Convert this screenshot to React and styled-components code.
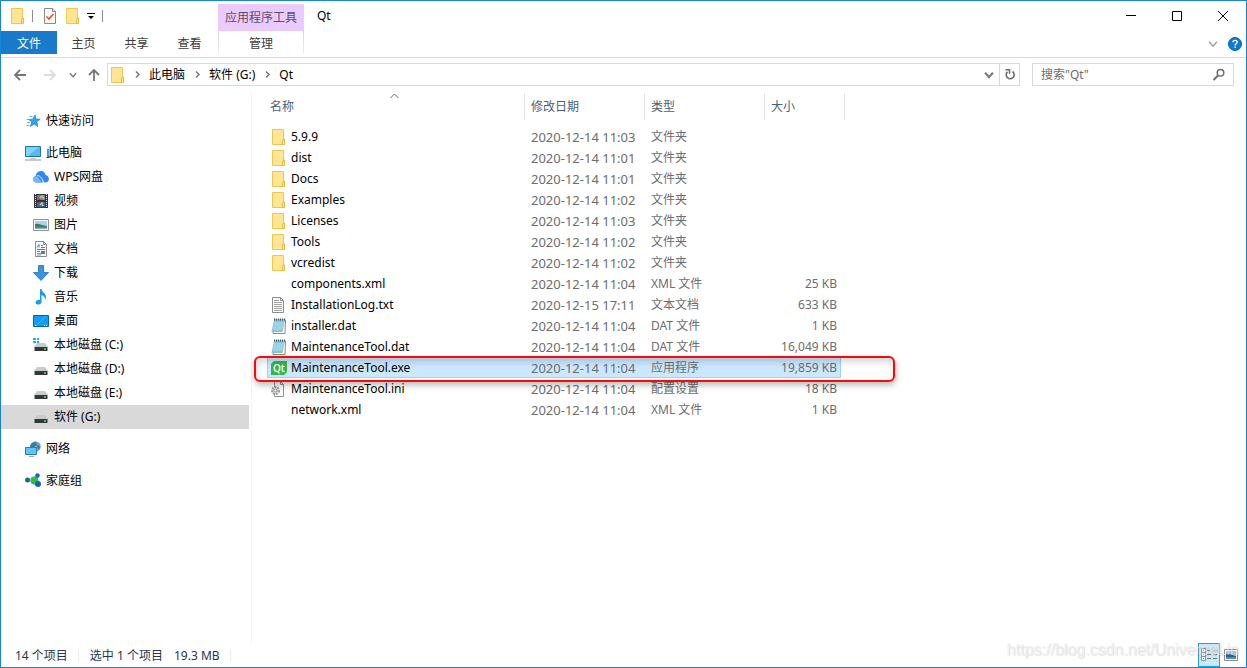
import React from "react";
import styled, { createGlobalStyle, css } from "styled-components";

const Global = createGlobalStyle`
  * { box-sizing: border-box; }
  html, body, #root { height: 100%; }
  body {
    margin: 0;
    background: #fff;
    color: #000;
    font: 12px/20px "Noto Sans", "Noto Sans CJK SC", sans-serif;
  }
  button, input { font: inherit; color: inherit; }
  button { border: 0; padding: 0; background: none; }
  a { color: inherit; text-decoration: none; }
  ul, ol { list-style: none; margin: 0; padding: 0; }
  svg { display: block; flex: none; }
`;

const Window = styled.div`
  position: relative;
  display: flex;
  flex-direction: column;
  min-height: 100%;
  border: 1px solid #1883d7;
`;

/* Title bar and ribbon */
const Header = styled.header`
  display: flex;
  height: 57px;
  border-bottom: 1px solid #dadbdc;
`;
const HeaderLeft = styled.div`
  width: 217px;
`;
const QuickBar = styled.div`
  display: flex;
  align-items: center;
  height: 30px;
  padding-left: 10px;
`;
const QuickButton = styled.button`
  display: flex;
  margin-right: ${(p) => p.$gap || 0}px;
`;
const Bar = styled.span`
  width: 1px;
  height: 12px;
  margin-right: ${(p) => p.$gap || 0}px;
  background: #8e8e8e;
`;
const Tabs = styled.nav`
  display: flex;
  height: 23px;
`;
const Tab = styled.button`
  width: 53px;
  height: 23px;
  padding-top: 2px;
  color: #3b3b3b;
  ${(p) =>
    p.$active &&
    css`
      width: 56px;
      background: #1979ca;
      color: #fff;
    `}
`;
const ContextGroup = styled.div`
  display: flex;
  flex-direction: column;
  width: 86px;
  padding-top: 3px;
`;
const ContextTitle = styled.div`
  height: 27px;
  padding-top: 4px;
  background: #ebcbfd;
  color: #5b4b66;
  text-align: center;
`;
const ContextTab = styled.button`
  height: 23px;
  padding-top: 2px;
  border: 1px solid;
  border-width: 0 1px;
  border-image: linear-gradient(#d5d5d5, #f0f0f0) 1;
  color: #3b3b3b;
`;
const Title = styled.h1`
  flex: 1;
  margin: 0;
  padding: 5px 0 0 13px;
  font-size: 12px;
  line-height: 20px;
  font-weight: 400;
`;
const HeaderRight = styled.div`
  display: flex;
  flex-direction: column;
  align-items: flex-end;
`;
const WindowButtons = styled.div`
  display: flex;
  height: 30px;
`;
const WindowButton = styled.button`
  display: grid;
  place-items: center;
  width: 46px;
`;
const RibbonTools = styled.div`
  display: flex;
  align-items: center;
  gap: 10px;
  height: 26px;
  padding-right: 4px;
`;

/* Address row */
const AddressRow = styled.div`
  display: flex;
  align-items: center;
  height: 35px;
  padding: 0 12px 2px;
`;
const NavButton = styled.button`
  display: grid;
  place-items: center;
  height: 22px;
  margin-right: ${(p) => p.$gap}px;
`;
const AddressBox = styled.div`
  display: flex;
  flex: 1;
  align-items: center;
  height: 23px;
  margin-right: 12px;
  padding-left: 3px;
  border: 1px solid #d9d9d9;
`;
const Crumbs = styled.ol`
  display: flex;
  flex: 1;
  align-items: center;
`;
const Crumb = styled.li`
  display: flex;
  align-items: center;
`;
const CrumbArrow = styled.span`
  display: grid;
  place-items: center;
  width: 24px;
`;
const AddressButton = styled.button`
  display: grid;
  place-items: center;
  width: 20px;
  height: 21px;
  border-left: ${(p) => (p.$line ? "1px solid #d9d9d9" : "0")};
`;
const SearchBox = styled.label`
  display: flex;
  align-items: center;
  width: 202px;
  height: 23px;
  padding: 0 8px;
  border: 1px solid #d9d9d9;
`;
const SearchInput = styled.input`
  flex: 1;
  min-width: 0;
  padding: 0;
  border: 0;
  outline: 0;
  &::placeholder { color: #6d6d6d; opacity: 1; }
`;

/* Body */
const Body = styled.div`
  display: flex;
  flex: 1;
`;
const Sidebar = styled.nav`
  width: 251px;
  padding-top: 16px;
  border-right: 1px solid #f3f3f3;
`;
const TreeGroup = styled.ul`
  margin-bottom: 8px;
`;
const TreeItem = styled.a`
  display: flex;
  align-items: center;
  gap: 5px;
  height: 24px;
  margin-right: 2px;
  padding-left: ${(p) => (p.$nested ? 32 : 24)}px;
  background: ${(p) => (p.$selected ? "#d9d9d9" : "transparent")};
`;
const Files = styled.main`
  flex: 1;
  min-width: 0;
  padding-left: 15px;
`;
const Table = styled.table`
  width: 574px;
  table-layout: fixed;
  border-collapse: separate;
  border-spacing: 0;
`;
const HeadCell = styled.th`
  position: relative;
  width: ${(p) => p.$w}px;
  height: 27px;
  padding: 0 0 0 ${(p) => (p.$first ? 3 : 6)}px;
  color: #4c607a;
  font-weight: 400;
  text-align: left;
  &::after {
    content: "";
    position: absolute;
    top: 0;
    right: ${(p) => (p.$last ? -4 : 0)}px;
    width: 1px;
    height: 27px;
    background: #e5e5e5;
  }
`;
const SortMark = styled.svg`
  position: absolute;
  top: 0;
  left: 123px;
`;
const Spacer = styled.tr`
  height: 6px;
`;
const Row = styled.tr`
  height: 21px;
  line-height: 20px;
  color: #6d6d6d;
  ${(p) =>
    p.$selected &&
    css`
      background: #cce8ff;
      box-shadow: inset 0 0 0 1px #99d1ff;
    `}
`;
const Cell = styled.td`
  padding: 0 ${(p) => (p.$right ? 4 : 0)}px 0 ${(p) => (p.$first ? 3 : 6)}px;
  text-align: ${(p) => (p.$right ? "right" : "left")};
  font-size: ${(p) => (p.$large ? 13 : 12)}px;
  white-space: nowrap;
`;
const FileName = styled.span`
  display: flex;
  align-items: center;
  gap: 3px;
  height: 20px;
  color: #000;
`;
const ListArea = styled.div`
  position: relative;
`;
const Highlight = styled.div`
  position: absolute;
  top: 263px;
  left: -13px;
  width: 641px;
  height: 26px;
  border: 2px solid #f80a0a;
  border-radius: 6px;
  box-shadow: 1px 3px 6px rgba(0, 0, 0, 0.28), inset 1px 4px 7px rgba(0, 0, 0, 0.16);
  pointer-events: none;
`;

/* Status bar */
const Status = styled.footer`
  display: flex;
  align-items: center;
  height: 24px;
  padding-left: 14px;
  color: #26344d;
`;
const StatusText = styled.span`
  display: flex;
  gap: 11px;
  padding: 1px 10px 0 0;
  margin-right: 11px;
  border-right: 1px solid #eee;
  line-height: 12px;
`;
const ViewButtons = styled.div`
  display: flex;
  margin-left: auto;
  padding-right: 4px;
`;
const ViewButton = styled.button`
  display: grid;
  place-items: center;
  width: 22px;
  height: 24px;
  ${(p) =>
    p.$active &&
    css`
      border: 1px solid #26a0da;
      background: #cbe8f6;
    `}
`;
const Watermark = styled.div`
  position: absolute;
  right: 7px;
  bottom: 7px;
  font: 16px/20px "Liberation Sans", sans-serif;
  color: rgba(255, 255, 255, 0.6);
  text-shadow: 0 0 1px rgba(0, 0, 0, 0.12), 1px 1px 1px rgba(0, 0, 0, 0.1);
  pointer-events: none;
`;

/* Icons */
const FolderIcon = () => (
  <svg width="14" height="16" viewBox="0 0 14 16">
    <path d="M.5 .5h11v15H.5z" fill="#ffe594" stroke="#edc84d" />
    <path d="M10.500 15.500V11l2-1v5.500z" fill="#ffe594" stroke="#e5bd3d" />
  </svg>
);
const PropsIcon = () => (
  <svg width="12" height="16" viewBox="0 0 12 16">
    <path d="M.5.5h8l3 3v12H.5z" fill="#f8f8f8" stroke="#888" />
    <path d="M8.500 .5v3h3" fill="#ddd" stroke="#888" />
    <path d="M2.500 8.500l2.500 2.500 4.500-5" fill="none" stroke="#e8531f" strokeWidth="1.600" />
  </svg>
);
const QuickMenuIcon = () => (
  <svg width="8" height="7" viewBox="0 0 8 7">
    <path d="M0 0h8v1H0zM1 3h6L4 6z" fill="#000" />
  </svg>
);
const Chevron = ({ dir = "right", color = "#777", width = 1.5, size = 9 }) => {
  const d = {
    right: "M3 1.500l3 3-3 3",
    down: "M1 2.500l3.500 4 3.500-4",
  }[dir];
  return (
    <svg width={size} height={size} viewBox="0 0 9 9">
      <path d={d} fill="none" stroke={color} strokeWidth={width} />
    </svg>
  );
};
const Arrow = ({ turn = 0, color = "#777" }) => (
  <svg width="14" height="14" viewBox="0 0 14 14">
    <path
      d="M13 7H2M7 2L2 7l5 5"
      fill="none"
      stroke={color}
      strokeWidth="1.800"
      transform={`rotate(${turn} 7 7)`}
    />
  </svg>
);
const HelpIcon = () => (
  <svg width="14" height="14" viewBox="0 0 14 14">
    <circle cx="7" cy="7" r="6.500" fill="#0b7ad8" stroke="#0560b0" />
    <path d="M5 5.300c0-2.600 4.200-2.500 4.200-.2 0 1.600-2.100 1.600-2.100 3.300M7.100 9.600v1.500" fill="none" stroke="#fff" strokeWidth="1.400" />
  </svg>
);
const RefreshIcon = () => (
  <svg width="12" height="13" viewBox="0 0 12 13">
    <path d="M3.500 3.800A4 4 0 1 0 8.500 3.500" fill="none" stroke="#6d6d6d" strokeWidth="1.600" />
    <path d="M1.500 1.800h4v4" fill="none" stroke="#6d6d6d" strokeWidth="1.500" />
  </svg>
);
const SearchIcon = () => (
  <svg width="13" height="13" viewBox="0 0 13 13">
    <circle cx="8.500" cy="4.800" r="3.300" fill="none" stroke="#6d6d6d" strokeWidth="1.500" />
    <path d="M6 7.500L1.500 12" stroke="#6d6d6d" strokeWidth="2" />
  </svg>
);

const treeIcons = {
  star: (
    <>
      <path d="M10 2l1 4 4.200.2-3.400 2.600 1 4.700-3.600-2.400-3.700 2.400 1.200-4.400-3-2.700 4.100-.2z" fill="#2fa4ec" stroke="#1b7cc4" strokeWidth=".7" />
      <path d="M4.500 3.500h3M1.500 6.500h3M2 9.500h3M1.500 12.500h3" stroke="#59b6ee" />
    </>
  ),
  pc: (
    <>
      <path d="M.5 1.500h15v10H.5z" fill="#4dbdf8" stroke="#2b7099" />
      <path d="M1 2h13L3 11H1z" fill="#82d3fc" />
      <path d="M5 13.500h6" stroke="#b9cbd7" />
      <path d="M0 15h16" stroke="#8299a9" />
    </>
  ),
  cloud: (
    <>
      <path d="M3 13.500a3.300 3.300 0 0 1 0-6.500C2 6.500 4 2 8 2c3 0 4 2 4.500 4 4.500 1 4.500 7 0 7.500z" fill="#2f86f6" />
      <path d="M0 10.500C0 8 3 6.500 5 8l4 5.500H3.500C1.500 13.500 0 12 0 10.500z" fill="#75b6ff" />
      <path d="M4 7c2-1 4 1 5 3l2 4" fill="none" stroke="#fff" />
    </>
  ),
  video: (
    <>
      <path d="M1 1h14v14H1z" fill="#333" />
      <path d="M4 2h8v5H4z" fill="#4d88cf" />
      <path d="M4 9h8v5H4z" fill="#3569b7" />
      <path d="M7 5l2-2 2 3M7 12l2-2 1 3" stroke="#eec02d" strokeWidth="1.500" fill="none" />
      <path d="M5 6h2" stroke="#d43c32" strokeWidth="2" />
      <path d="M2.500 1v14M13.500 1v14" stroke="#e4e4e4" strokeDasharray="1 1" />
    </>
  ),
  image: (
    <>
      <path d="M.5 2.500h15v11H.5z" fill="#fff" stroke="#929292" />
      <path d="M2 4h12v8H2z" fill="#a9d3f5" />
      <path d="M2 7c4-1 7 2 12 2v2H2z" fill="#477769" />
      <path d="M2 10.500h12V12H2z" fill="#7fa9cc" />
    </>
  ),
  doc: (
    <>
      <path d="M2.500 .5h8l3 3v12h-11z" fill="#fafafa" stroke="#8c8c8c" />
      <path d="M10.500 .5v3h3" fill="none" stroke="#8c8c8c" />
      <path d="M4 6.500l2-3v3M8 4.500h2M8 6.500h4M4 8.500h8M4 10.500h3" fill="none" stroke="#1a8dd3" />
      <path d="M4 12.500h4M4 14h4" stroke="#929292" />
      <path d="M8 10h4v3H8z" fill="#4485b3" />
    </>
  ),
  download: <path d="M5.500 .5h5v7h5L8 15.500.5 7.500h5z" fill="#3794df" stroke="#1d70b7" strokeWidth=".8" />,
  music: (
    <path d="M7 0h1.500c0 3 4.500 4 4.500 8 0 1-.5 2-1 3 0-3-1-4-3.500-5v7c0 3-6 3.500-6 .8C2.500 11.500 5 10.500 7 11z" fill="#159bf2" />
  ),
  desktop: (
    <>
      <path d="M.5 2.500h15v11H.5z" fill="#159cf4" stroke="#07639e" />
      <path d="M13 3L3 13" stroke="#43b6ff" />
      <path d="M2 12.500h2M11 12.500h3" stroke="#fff" strokeDasharray="1 1" />
    </>
  ),
  disk: (
    <>
      <path d="M4 6h8l3 4H1z" fill="#c8cacc" />
      <path d="M1.500 10h13v4h-13z" fill="#35383a" />
      <path d="M11 12h2" stroke="#39e85a" strokeWidth="1.500" />
    </>
  ),
  network: (
    <>
      <circle cx="10.500" cy="5.500" r="5.300" fill="#6eaecb" />
      <path d="M7 2l4-1 1 3-3 2 1 4H6c-2-3-1-6 1-8zM13 3l2 3-1 3-2-3z" fill="#3b7c9e" />
      <path d="M.5 6.500h11v7H.5z" fill="#60c5fb" stroke="#2d7baf" />
      <path d="M4 15.500h5" stroke="#8fb0c2" />
    </>
  ),
  home: (
    <>
      <path d="M3 7l9-5v10z" fill="none" stroke="#b9d6c1" />
      <circle cx="2.500" cy="7" r="2.500" fill="#1666ae" />
      <circle cx="9.500" cy="7.500" r="4" fill="#35ba4c" />
      <circle cx="12.500" cy="2.500" r="2.200" fill="#1666ae" />
      <circle cx="13" cy="11" r="3" fill="#1666ae" />
    </>
  ),
};
treeIcons.system = (
  <>
    {treeIcons.disk}
    <path d="M0 1h3v2H0zM4 1h2v2H4zM0 4h3v2H0zM4 4h2v2H4z" fill="#13b5ef" />
  </>
);
const TreeIcon = ({ name }) => (
  <svg width="16" height="16" viewBox="0 0 16 16">{treeIcons[name]}</svg>
);

const QtText = styled.text`
  font: 600 10px "Open Sans", sans-serif;
  fill: #fff;
`;
const fileIcons = {
  folder: (
    <>
      <path d="M1.500 .5h11v15h-11z" fill="#ffe594" stroke="#edc84d" />
      <path d="M11.500 15.500V11l2-1v5.500z" fill="#ffe594" stroke="#e5bd3d" />
    </>
  ),
  txt: (
    <>
      <path d="M1.500 .5h8l3 3v12h-11z" fill="#fafafa" stroke="#8c8c8c" />
      <path d="M3 3.500h5M3 5.500h8M3 7.500h8M3 9.500h8M3 11.500h8M3 13.500h8" stroke="#a1a1a1" />
      <path d="M9.500 .5v3h3" fill="none" stroke="#8c8c8c" />
    </>
  ),
  dat: (
    <>
      <path d="M4 2h10.500l-.5 13.500H2z" fill="#fff" stroke="#9c8a60" />
      <path d="M3 2h11l-2.500 12H.5z" fill="#86c4d9" />
      <path d="M3 5h10M2.500 7h10M2 9h10M2 11h9" stroke="#b3e1ed" />
      <path d="M3 1.500h12" stroke="#40545d" strokeWidth="2" strokeDasharray="1 1" />
    </>
  ),
  qt: (
    <>
      <path d="M3 1h13v11l-3 3H0V4z" fill="#32b84b" />
      <QtText x="2" y="12">Qt</QtText>
    </>
  ),
  ini: (
    <>
      <path d="M3.500 .5h6l3 3v12h-9z" fill="#fafafa" stroke="#929292" />
      <path d="M9.500 .5v3h3" fill="none" stroke="#929292" />
      <circle cx="4.500" cy="9.500" r="3.500" fill="#e5e5e5" stroke="#999" strokeWidth="2" strokeDasharray="2 1" />
      <circle cx="4.500" cy="9.500" r="1.500" fill="#fff" stroke="#888" />
    </>
  ),
};
const FileIcon = ({ kind }) => (
  <svg width="18" height="16" viewBox="-1 0 18 16">{fileIcons[kind]}</svg>
);

const tree = [
  [{ icon: "star", text: "快速访问" }],
  [
    { icon: "pc", text: "此电脑" },
    { icon: "cloud", text: "WPS网盘", nested: true },
    { icon: "video", text: "视频", nested: true },
    { icon: "image", text: "图片", nested: true },
    { icon: "doc", text: "文档", nested: true },
    { icon: "download", text: "下载", nested: true },
    { icon: "music", text: "音乐", nested: true },
    { icon: "desktop", text: "桌面", nested: true },
    { icon: "system", text: "本地磁盘 (C:)", nested: true },
    { icon: "disk", text: "本地磁盘 (D:)", nested: true },
    { icon: "disk", text: "本地磁盘 (E:)", nested: true },
    { icon: "disk", text: "软件 (G:)", nested: true, selected: true },
  ],
  [{ icon: "network", text: "网络" }],
  [{ icon: "home", text: "家庭组" }],
];

const files = [
  ["folder", "5.9.9", "2020-12-14 11:03", "文件夹", ""],
  ["folder", "dist", "2020-12-14 11:01", "文件夹", ""],
  ["folder", "Docs", "2020-12-14 11:01", "文件夹", ""],
  ["folder", "Examples", "2020-12-14 11:02", "文件夹", ""],
  ["folder", "Licenses", "2020-12-14 11:03", "文件夹", ""],
  ["folder", "Tools", "2020-12-14 11:02", "文件夹", ""],
  ["folder", "vcredist", "2020-12-14 11:02", "文件夹", ""],
  ["none", "components.xml", "2020-12-14 11:04", "XML 文件", "25 KB"],
  ["txt", "InstallationLog.txt", "2020-12-15 17:11", "文本文档", "633 KB"],
  ["dat", "installer.dat", "2020-12-14 11:04", "DAT 文件", "1 KB"],
  ["dat", "MaintenanceTool.dat", "2020-12-14 11:04", "DAT 文件", "16,049 KB"],
  ["qt", "MaintenanceTool.exe", "2020-12-14 11:04", "应用程序", "19,859 KB"],
  ["ini", "MaintenanceTool.ini", "2020-12-14 11:04", "配置设置", "18 KB"],
  ["none", "network.xml", "2020-12-14 11:04", "XML 文件", "1 KB"],
];
const selectedFile = "MaintenanceTool.exe";

export default function App() {
  return (
    <Window>
      <Global />
      <Header>
        <HeaderLeft>
          <QuickBar>
            <QuickButton aria-label="Folder" $gap={7}><FolderIcon /></QuickButton>
            <Bar $gap={11} />
            <QuickButton aria-label="Properties" $gap={10}><PropsIcon /></QuickButton>
            <QuickButton aria-label="New folder" $gap={7}><FolderIcon /></QuickButton>
            <QuickButton aria-label="Customize toolbar" $gap={7}><QuickMenuIcon /></QuickButton>
            <Bar />
          </QuickBar>
          <Tabs>
            <Tab $active>文件</Tab>
            <Tab>主页</Tab>
            <Tab>共享</Tab>
            <Tab>查看</Tab>
          </Tabs>
        </HeaderLeft>
        <ContextGroup>
          <ContextTitle>应用程序工具</ContextTitle>
          <ContextTab>管理</ContextTab>
        </ContextGroup>
        <Title>Qt</Title>
        <HeaderRight>
          <WindowButtons>
            <WindowButton aria-label="Minimize">
              <svg width="10" height="10"><path d="M0 4.500h10" stroke="#000" /></svg>
            </WindowButton>
            <WindowButton aria-label="Maximize">
              <svg width="10" height="10"><path d="M.5.5h9v9h-9z" fill="none" stroke="#000" /></svg>
            </WindowButton>
            <WindowButton aria-label="Close">
              <svg width="10" height="10"><path d="M0 0l10 10M10 0L0 10" stroke="#000" /></svg>
            </WindowButton>
          </WindowButtons>
          <RibbonTools>
            <button aria-label="Collapse ribbon"><Chevron dir="down" color="#999" width={1.2} size={10} /></button>
            <button aria-label="Help"><HelpIcon /></button>
          </RibbonTools>
        </HeaderRight>
      </Header>

      <AddressRow>
        <NavButton aria-label="Back" $gap={16}><Arrow /></NavButton>
        <NavButton aria-label="Forward" $gap={12}><Arrow turn={180} color="#ddd" /></NavButton>
        <NavButton aria-label="Recent" $gap={10}><Chevron dir="down" size={8} /></NavButton>
        <NavButton aria-label="Up" $gap={6}><Arrow turn={90} /></NavButton>
        <AddressBox>
          <FolderIcon />
          <Crumbs>
            {["此电脑", "软件 (G:)", "Qt"].map((c) => (
              <Crumb key={c}>
                <CrumbArrow><Chevron /></CrumbArrow>
                <a href="#">{c}</a>
              </Crumb>
            ))}
          </Crumbs>
          <AddressButton aria-label="History"><Chevron dir="down" width={1.8} size={10} /></AddressButton>
          <AddressButton aria-label="Refresh" $line><RefreshIcon /></AddressButton>
        </AddressBox>
        <SearchBox>
          <SearchInput aria-label="搜索" placeholder={'搜索"Qt"'} />
          <SearchIcon />
        </SearchBox>
      </AddressRow>

      <Body>
        <Sidebar>
          {tree.map((group) => (
            <TreeGroup key={group[0].text}>
              {group.map((item) => (
                <li key={item.text}>
                  <TreeItem href="#" $nested={item.nested} $selected={item.selected}>
                    <TreeIcon name={item.icon} />
                    {item.text}
                  </TreeItem>
                </li>
              ))}
            </TreeGroup>
          ))}
        </Sidebar>
        <Files>
          <ListArea>
            <Table>
              <thead>
                <tr>
                  <HeadCell $w={258} $first>
                    名称
                    <SortMark width="9" height="6" viewBox="0 0 9 6">
                      <path d="M.5 5l4-4 4 4" fill="none" stroke="#6d6d6d" />
                    </SortMark>
                  </HeadCell>
                  <HeadCell $w={120}>修改日期</HeadCell>
                  <HeadCell $w={120}>类型</HeadCell>
                  <HeadCell $w={76} $last>大小</HeadCell>
                </tr>
              </thead>
              <tbody>
                <Spacer />
                {files.map(([kind, name, date, type, size]) => (
                  <Row key={name} $selected={name === selectedFile}>
                    <Cell $first>
                      <FileName><FileIcon kind={kind} />{name}</FileName>
                    </Cell>
                    <Cell $large>{date}</Cell>
                    <Cell>{type}</Cell>
                    <Cell $right>{size}</Cell>
                  </Row>
                ))}
              </tbody>
            </Table>
            <Highlight />
          </ListArea>
        </Files>
      </Body>

      <Status>
        <StatusText>14 个项目</StatusText>
        <StatusText>
          <span>选中 1 个项目</span>
          <span>19.3 MB</span>
        </StatusText>
        <ViewButtons>
          <ViewButton aria-label="Details" $active>
            <svg width="16" height="14" viewBox="0 0 16 14">
              <path d="M.5.500h4v4h-4zM.5 4.500h4v4h-4zM.5 8.500h4v4h-4z" fill="#fff" stroke="#8c8c8c" />
              <path d="M2 2.500h1M2 6.500h1" stroke="#3576b8" />
              <path d="M2 10.500h1" stroke="#d22" />
              <path d="M6 2.500h4M12 2.500h4M6 6.500h4M12 6.500h4M6 10.500h4M12 10.500h4" stroke="#6a7a82" />
            </svg>
          </ViewButton>
          <ViewButton aria-label="Large icons">
            <svg width="14" height="12" viewBox="0 0 14 12">
              <path d="M.5.500h13v11H.5z" fill="#fff" stroke="#8c8c8c" />
              <path d="M2 2h10v8H2z" fill="#9dcbf2" />
              <path d="M2 5c4-1 6 2 10 2v1H2z" fill="#2f6187" />
              <path d="M2 8h10v2H2z" fill="#4f8fc4" />
            </svg>
          </ViewButton>
        </ViewButtons>
      </Status>
      <Watermark>https://blog.csdn.net/UniverseLin</Watermark>
    </Window>
  );
}
